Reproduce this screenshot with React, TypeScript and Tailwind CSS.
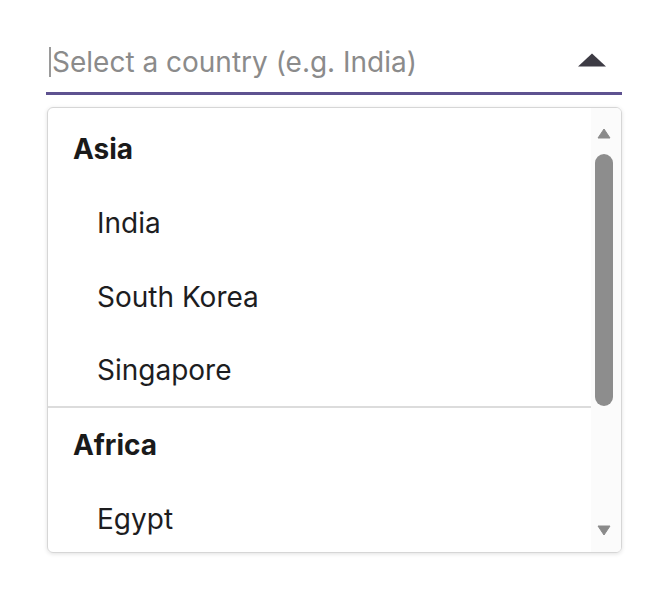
// @ts-nocheck
/* eslint-disable */

const GROUPS = [
  { name: "Asia", items: ["India", "South Korea", "Singapore"] },
  { name: "Africa", items: ["Egypt"] },
];

export default function App() {
  return (
    <div
      className="w-[668px] h-[602px] bg-white pl-[46px] pt-[37px]"
      style={{ fontFamily: "Inter, 'Noto Sans', sans-serif" }}
    >
      {/* input */}
      <div className="w-[576px] h-[58px] border-b-[3px] border-[#5e5290] flex items-center">
        <div className="w-[2px] h-[30px] bg-[#9a9a9a] ml-[3px] mb-[6px]" />
        <span className="flex-1 text-[28px] text-[#8b8b8b] leading-none mb-[6px] ml-[1px]">
          Select a country (e.g. India)
        </span>
        <svg width="28" height="14" viewBox="0 0 28 14" className="mr-[16px] mb-[10px]">
          <path d="M0 13.5 L14 0.5 L28 13.5 Z" fill="#3d3b44" />
        </svg>
      </div>

      {/* dropdown */}
      <div className="mt-[12px] ml-[1px] w-[575px] h-[446px] border border-[#d6d6d6] rounded-[6px] shadow-[0_1px_4px_rgba(0,0,0,0.12)] flex overflow-hidden">
        <div className="flex-1 pt-[4px] overflow-hidden">
          {GROUPS.map((g, gi) => (
            <div
              key={g.name}
              className={gi === 0 ? "border-b-2 border-[#dcdcdc]" : ""}
            >
              <div className="h-[74px] flex items-center pl-[25px] text-[28px] font-bold text-[#1a1a1a]">
                {g.name}
              </div>
              {g.items.map((it, ii) => (
                <div
                  key={it}
                  className={
                    gi === 0 && ii === g.items.length - 1
                      ? "h-[72px] flex items-center pl-[49px] text-[28px] text-[#1d1d1f]"
                      : "h-[74px] flex items-center pl-[49px] text-[28px] text-[#1d1d1f]"
                  }
                >
                  {it}
                </div>
              ))}
            </div>
          ))}
        </div>

        {/* scrollbar */}
        <div className="w-[30px] bg-[#fbfbfb] flex flex-col items-center pt-[20px] pb-[16px] pr-[5px]">
          <svg width="14" height="11" viewBox="0 0 14 11">
            <path d="M1 10 L7 1 L13 10 Z" fill="#8a8a8a" stroke="#8a8a8a" strokeLinejoin="round" />
          </svg>
          <div className="w-[18px] h-[252px] mt-[15px] rounded-full bg-[#8d8d8d]" />
          <div className="flex-1" />
          <svg width="14" height="11" viewBox="0 0 14 11">
            <path d="M1 1 L7 10 L13 1 Z" fill="#8a8a8a" stroke="#8a8a8a" strokeLinejoin="round" />
          </svg>
        </div>
      </div>
    </div>
  );
}
